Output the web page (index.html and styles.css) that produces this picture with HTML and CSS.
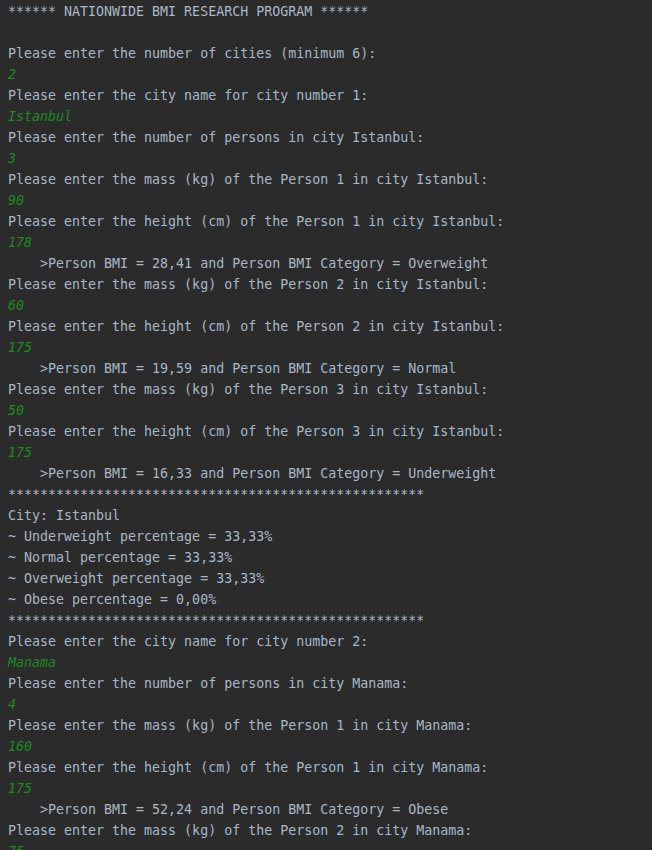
FILE: index.html
```html
<!DOCTYPE html>
<html>
<head>
<meta charset="utf-8">
<link rel="stylesheet" href="styles.css">
</head>
<body>
<div class="console">
<div class="line">****** NATIONWIDE BMI RESEARCH PROGRAM ******</div>
<div class="line"> </div>
<div class="line">Please enter the number of cities (minimum 6):</div>
<div class="line input">2</div>
<div class="line">Please enter the city name for city number 1:</div>
<div class="line input">Istanbul</div>
<div class="line">Please enter the number of persons in city Istanbul:</div>
<div class="line input">3</div>
<div class="line">Please enter the mass (kg) of the Person 1 in city Istanbul:</div>
<div class="line input">90</div>
<div class="line">Please enter the height (cm) of the Person 1 in city Istanbul:</div>
<div class="line input">178</div>
<div class="line">    &gt;Person BMI = 28,41 and Person BMI Category = Overweight</div>
<div class="line">Please enter the mass (kg) of the Person 2 in city Istanbul:</div>
<div class="line input">60</div>
<div class="line">Please enter the height (cm) of the Person 2 in city Istanbul:</div>
<div class="line input">175</div>
<div class="line">    &gt;Person BMI = 19,59 and Person BMI Category = Normal</div>
<div class="line">Please enter the mass (kg) of the Person 3 in city Istanbul:</div>
<div class="line input">50</div>
<div class="line">Please enter the height (cm) of the Person 3 in city Istanbul:</div>
<div class="line input">175</div>
<div class="line">    &gt;Person BMI = 16,33 and Person BMI Category = Underweight</div>
<div class="line">****************************************************</div>
<div class="line">City: Istanbul</div>
<div class="line">~ Underweight percentage = 33,33%</div>
<div class="line">~ Normal percentage = 33,33%</div>
<div class="line">~ Overweight percentage = 33,33%</div>
<div class="line">~ Obese percentage = 0,00%</div>
<div class="line">****************************************************</div>
<div class="line">Please enter the city name for city number 2:</div>
<div class="line input">Manama</div>
<div class="line">Please enter the number of persons in city Manama:</div>
<div class="line input">4</div>
<div class="line">Please enter the mass (kg) of the Person 1 in city Manama:</div>
<div class="line input">160</div>
<div class="line">Please enter the height (cm) of the Person 1 in city Manama:</div>
<div class="line input">175</div>
<div class="line">    &gt;Person BMI = 52,24 and Person BMI Category = Obese</div>
<div class="line">Please enter the mass (kg) of the Person 2 in city Manama:</div>
<div class="line input">75</div>
</div>
</body>
</html>
```
FILE: styles.css
```css
html, body {
  margin: 0;
  padding: 0;
  background: #2b2b2b;
  overflow: hidden;
}
.console {
  padding: 1px 8px 0 8px;
  font-family: "DejaVu Sans Mono", "Liberation Mono", monospace;
  font-size: 13.3px;
  line-height: 21px;
  color: #a9b7c6;
}
.line {
  white-space: pre;
  height: 21px;
}
.input {
  color: #1f8a1f;
  font-style: italic;
}
```
